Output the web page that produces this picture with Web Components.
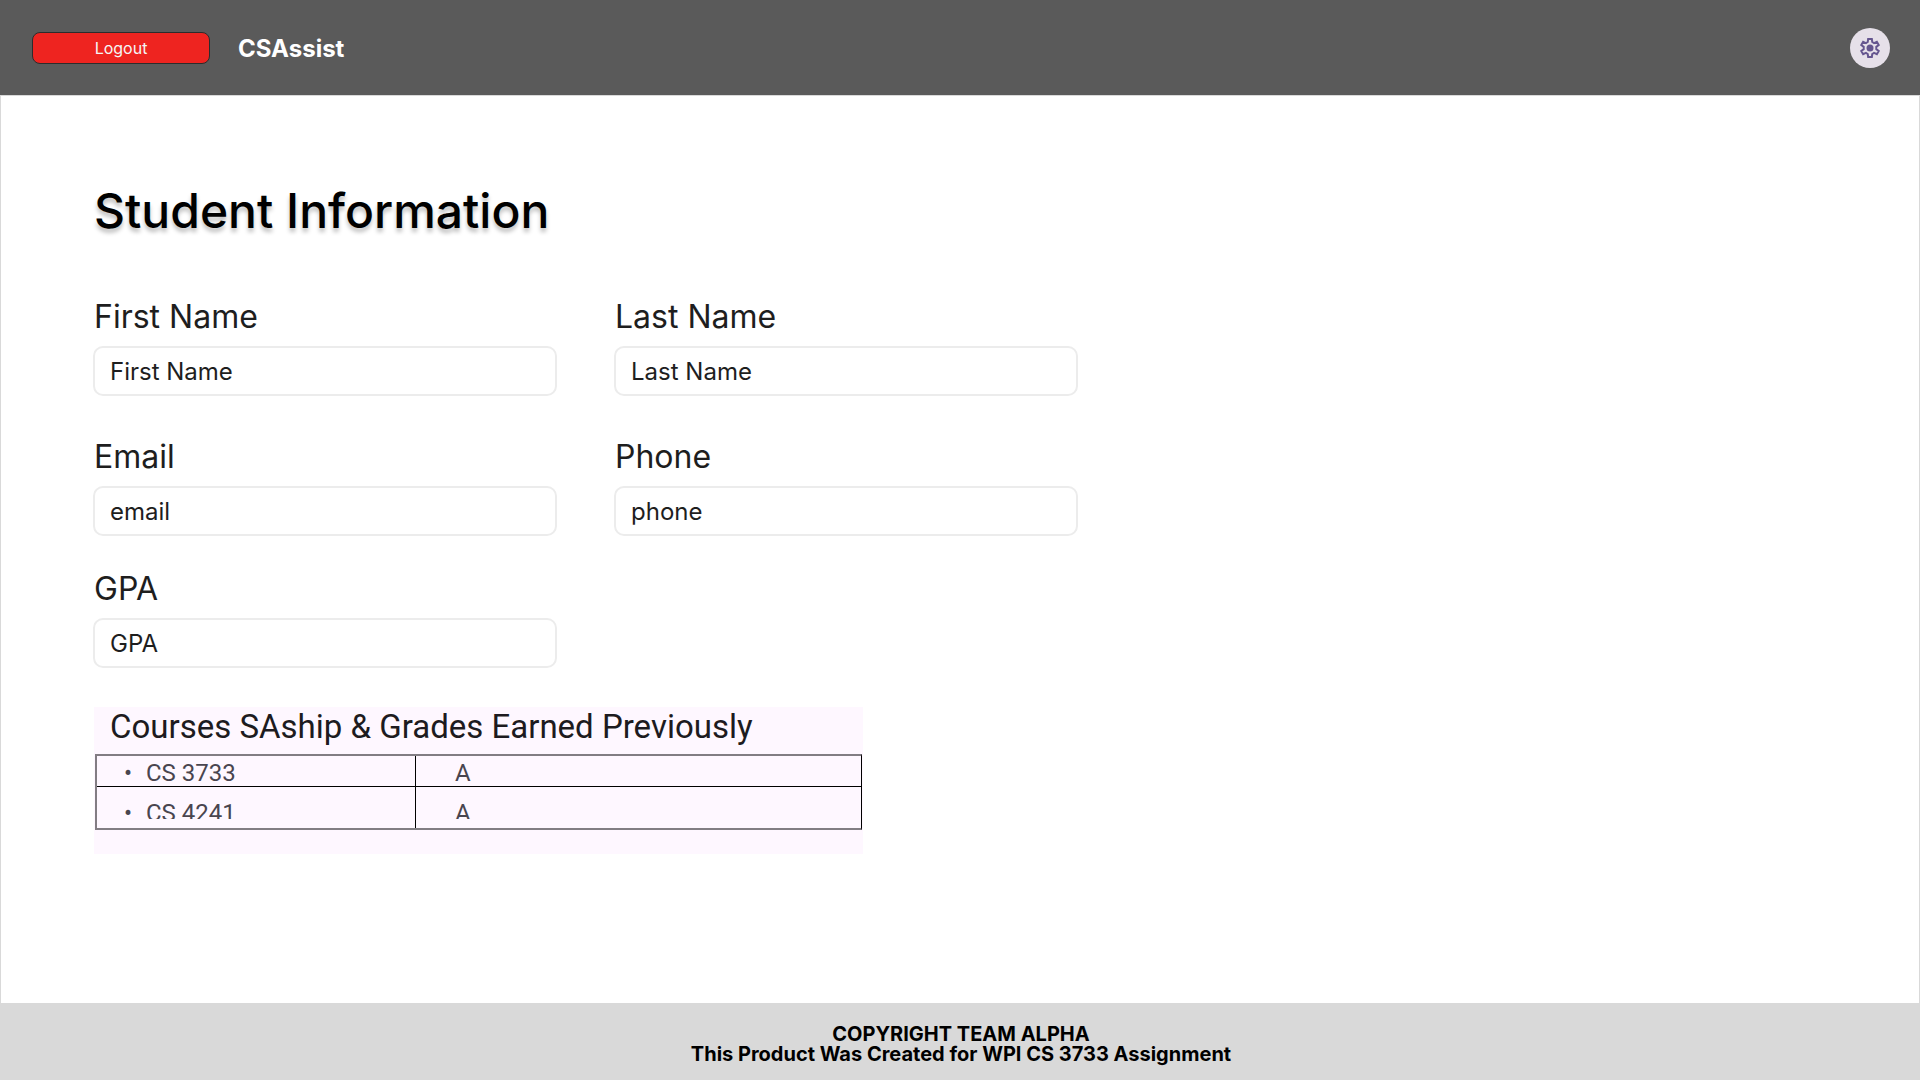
<!DOCTYPE html>
<html lang="en">
<head>
<meta charset="utf-8">
<title>CSAssist – Student Information</title>
<style>
  html, body { margin: 0; }
  body { font-family: Inter, "Liberation Sans", sans-serif; color: #1e1e1e; background: #fff; }
</style>
</head>
<body>
<student-page></student-page>

<script>
const define = (name, html, setup) => {
  const template = document.createElement('template');
  template.innerHTML = html;
  customElements.define(name, class extends HTMLElement {
    connectedCallback() {
      if (this.shadowRoot) return;
      const root = this.attachShadow({ mode: 'open' });
      root.append(template.content.cloneNode(true));
      if (setup) setup(this, root);
    }
  });
};

define('logout-button', `
  <style>
    :host { display: block; width: 178px; }
    button {
      box-sizing: border-box; display: block; width: 100%; height: 32px; padding: 0;
      border: 1px solid #2c2c2c; border-radius: 8px; background: #ee2420;
      color: #f5f5f5; font: 400 16px/16px Inter, sans-serif; cursor: pointer;
    }
  </style>
  <button type="button"><slot></slot></button>`);

define('settings-button', `
  <style>
    :host { display: block; }
    button {
      display: grid; place-items: center; width: 40px; height: 40px; padding: 0;
      border: 0; border-radius: 50%; background: #e6e0e9; color: #65558f; cursor: pointer;
    }
  </style>
  <button type="button" aria-label="Settings">
    <svg width="24" height="24" viewBox="0 0 24 24" fill="none" stroke="currentColor" stroke-width="2" aria-hidden="true">
      <path d="M10.15 3h3.7l.4 3 1.800 1.050 2.800-1.200 1.850 3.200-2.400 1.800v2.300l2.400 1.800-1.850 3.200-2.800-1.200-1.800 1.050-.4 3h-3.700l-.4-3-1.800-1.050-2.800 1.200-1.850-3.200 2.400-1.800v-2.300l-2.400-1.800 1.850-3.200 2.800 1.200 1.800-1.050z"/>
      <circle cx="12" cy="12" r="3.500" fill="currentColor" stroke="none"/>
    </svg>
  </button>`);

define('app-header', `
  <style>
    :host {
      display: flex; align-items: center; gap: 28px; box-sizing: border-box;
      padding: 28px 30px 27px 32px; background: #5a5a5a;
    }
    .brand { flex: 1; padding-top: 2px; color: #fff; font-size: 24px; line-height: 32px; font-weight: 700; }
  </style>
  <logout-button>Logout</logout-button>
  <div class="brand"><slot></slot></div>
  <settings-button></settings-button>`);

define('text-field', `
  <style>
    :host { display: block; }
    label { display: block; margin-bottom: 7px; padding-left: 1px; font-size: 32px; line-height: 45px; }
    input {
      box-sizing: border-box; display: block; width: 100%; height: 50px; padding: 0 15px;
      border: 2px solid #ececec; border-radius: 10px; background: #fff;
      color: #1e1e1e; font: 400 24px/32px Inter, sans-serif;
    }
  </style>
  <label for="field"></label>
  <input id="field">`, (host, root) => {
  root.querySelector('label').textContent = host.getAttribute('label');
  const input = root.querySelector('input');
  input.type = host.getAttribute('type') || 'text';
  input.value = host.getAttribute('value') || '';
});

define('course-table', `
  <style>
    :host {
      display: block; box-sizing: border-box; max-width: 769px; padding: 0 1px 24px;
      background: #fef7ff; font-family: Roboto, sans-serif;
    }
    h2 { margin: 0; padding: 0 15px 7px; color: #1d1b20; font-size: 33px; line-height: 40px; font-weight: 400; }
    table {
      width: 100%; table-layout: fixed; border-collapse: separate; border-spacing: 0;
      border: 2px solid #827d83; border-right: 1px solid #000;
      color: #49454f; font-size: 24px; line-height: 24px;
    }
    col:first-child { width: 319px; }
    td { padding: 5px 39px 1px; }
    td:first-child { padding-left: 27px; border-right: 1px solid #000; }
    tr + tr td { padding-top: 14px; padding-bottom: 9px; border-top: 1px solid #000; }
    .line { display: flex; }
    tr + tr .line { height: 18px; overflow: hidden; }
    .bullet { width: 22px; }
  </style>
  <h2><slot></slot></h2>
  <table aria-label="Courses and grades">
    <colgroup><col><col></colgroup>
    <tbody>
      <tr><td><div class="line"><span class="bullet">•</span><span>CS 3733</span></div></td><td><div class="line">A</div></td></tr>
      <tr><td><div class="line"><span class="bullet">•</span><span>CS 4241</span></div></td><td><div class="line">A</div></td></tr>
    </tbody>
  </table>`);

define('student-form', `
  <style>
    :host { display: block; padding: 80px 92px; }
    h1 {
      margin: 0 0 48px; padding-left: 1px; color: #000; font-size: 48px; line-height: 70px; font-weight: 500;
      text-shadow: 0 4px 4px rgba(0, 0, 0, .25);
    }
    form { display: grid; grid-template-columns: repeat(2, minmax(0, 464px)); column-gap: 57px; }
    .names { margin-bottom: 38px; }
    .contact { margin-bottom: 30px; }
    course-table { margin: 39px 0 0 1px; }
  </style>
  <h1>Student Information</h1>
  <form>
    <text-field class="names" label="First Name" value="First Name"></text-field>
    <text-field class="names" label="Last Name" value="Last Name"></text-field>
    <text-field class="contact" label="Email" value="email"></text-field>
    <text-field class="contact" label="Phone" value="phone"></text-field>
    <text-field label="GPA" value="GPA"></text-field>
  </form>
  <course-table>Courses SAship &amp; Grades Earned Previously</course-table>`);

define('app-footer', `
  <style>
    :host {
      display: block; padding: 21px 16px 16px 18px; background: #d9d9d9; color: #000;
      text-align: center; font-size: 20px; line-height: 20px; font-weight: 700;
    }
    p { margin: 0; }
  </style>
  <p>COPYRIGHT TEAM ALPHA</p>
  <p>This Product Was Created for WPI CS 3733 Assignment</p>`);

define('student-page', `
  <style>
    :host { display: flex; flex-direction: column; min-height: 100vh; }
    main { flex: 1; box-sizing: border-box; border: 1px solid #d9d9d9; border-bottom: 0; }
  </style>
  <app-header>CSAssist</app-header>
  <main><student-form></student-form></main>
  <app-footer></app-footer>`);
</script>
</body>
</html>
